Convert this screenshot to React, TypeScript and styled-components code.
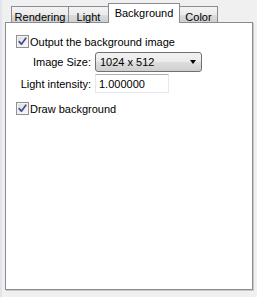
import styled, { createGlobalStyle } from "styled-components"

const Global = createGlobalStyle`
  html, body {
    margin: 0;
    padding: 0;
    background: #f0f0f0;
  }
  body {
    font-family: "Liberation Sans", Arial, sans-serif;
    font-size: 11px;
    color: #000;
  }
`

const tabs = [
  { label: "Rendering", width: 58 },
  { label: "Light", width: 41 },
  { label: "Background", width: 72 },
  { label: "Color", width: 39 },
]

function Check({ label, checked }: { label: string; checked: boolean }) {
  return (
    <CheckRow>
      <Box>
        {checked && (
          <svg width="9" height="9" viewBox="0 0 9 9">
            <path d="M1.2 4.6 L3.4 7.2 L7.8 1.2" fill="none" stroke="#3a4f8f" strokeWidth="1.7" strokeLinejoin="round" strokeLinecap="round" />
          </svg>
        )}
      </Box>
      <CheckText>{label}</CheckText>
    </CheckRow>
  )
}

export default function App() {
  const active = 2

  return (
    <>
      <Global />
      <Page>
        <TabBar>
          {tabs.map((t, i) => (
            <Tab key={t.label} $active={i === active} $w={t.width}>
              {t.label}
            </Tab>
          ))}
        </TabBar>
        <Panel>
          <Check label="Output the background image" checked />
          <Fields>
            <Label>Image Size:</Label>
            <Select>
              <span>1024 x 512</span>
              <Arrow />
            </Select>
            <Label>Light intensity:</Label>
            <Input>1.000000</Input>
          </Fields>
          <Check label="Draw background" checked />
        </Panel>
      </Page>
    </>
  )
}

//style

const Page = styled.div`
  display: flex;
  flex-direction: column;
  width: 257px;
  height: 297px;
  box-sizing: border-box;
  padding: 3px 0 0 3px;
  border-left: 2px solid #e1e5eb;
`

const TabBar = styled.div`
  display: flex;
  align-items: flex-end;
  height: 20px;
  padding-left: 6px;
  position: relative;
  z-index: 2;
  margin-bottom: -1px;
`

const Tab = styled.div<{ $active: boolean; $w: number }>`
  box-sizing: border-box;
  width: ${(p) => p.$w}px;
  height: ${(p) => (p.$active ? 20 : 17)}px;
  margin-right: -1px;
  padding-top: ${(p) => (p.$active ? 3 : 4)}px;
  text-align: center;
  line-height: 12px;
  border: 1px solid #898c95;
  border-bottom: ${(p) => (p.$active ? "none" : "1px solid #898c95")};
  background: ${(p) =>
    p.$active ? "#fff" : "linear-gradient(#f3f3f3 0%, #ebebeb 50%, #dddddd 51%, #cfcfcf 100%)"};
  position: relative;
  z-index: ${(p) => (p.$active ? 2 : 1)};
  white-space: nowrap;
`

const Panel = styled.div`
  display: flex;
  flex-direction: column;
  width: 248px;
  height: 268px;
  box-sizing: border-box;
  padding: 11px 0 0 10px;
  background: #fff;
  border: 1px solid #898c95;
  box-shadow: 1px 1px 0 #c8c8c8;
  position: relative;
  z-index: 1;
`

const CheckRow = styled.div`
  display: flex;
  align-items: center;
  height: 15px;
`

const Box = styled.span`
  display: flex;
  align-items: center;
  justify-content: center;
  width: 13px;
  height: 13px;
  box-sizing: border-box;
  border: 1px solid #8f8f8f;
  background: linear-gradient(135deg, #dcdcdc, #fbfbfb);
  box-shadow: inset 0 0 0 1px #f4f4f4;
`

const CheckText = styled.span`
  margin-left: 1px;
`

const Fields = styled.div`
  display: grid;
  grid-template-columns: 75px 107px;
  grid-template-rows: 20px 19px;
  column-gap: 4px;
  row-gap: 2px;
  margin: 3px 0 8px;
  align-items: center;
`

const Label = styled.span`
  justify-self: end;
  white-space: nowrap;
`

const Select = styled.div`
  display: flex;
  align-items: center;
  justify-content: space-between;
  height: 20px;
  box-sizing: border-box;
  padding: 0 5px 0 4px;
  border: 1px solid #707070;
  border-radius: 3px;
  background: linear-gradient(#f2f2f2 0%, #ebebeb 50%, #dddddd 51%, #cfcfcf 100%);
`

const Arrow = styled.span`
  width: 0;
  height: 0;
  border-left: 3.5px solid transparent;
  border-right: 3.5px solid transparent;
  border-top: 4px solid #000;
`

const Input = styled.div`
  display: flex;
  align-items: center;
  width: 74px;
  height: 19px;
  box-sizing: border-box;
  padding-left: 3px;
  border: 1px solid #e3e9ef;
  border-top-color: #abadb3;
  background: #fff;
`
